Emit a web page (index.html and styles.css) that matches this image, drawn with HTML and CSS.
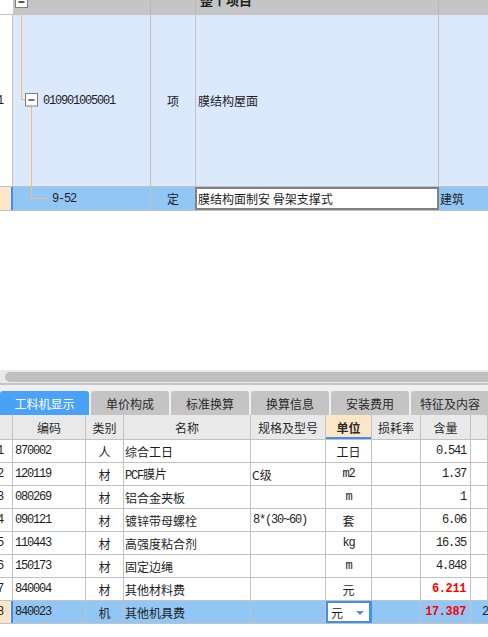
FILE: index.html
```html
<!DOCTYPE html>
<html lang="zh-CN">
<head>
<meta charset="utf-8">
<title>工料机显示</title>
<link rel="stylesheet" href="styles.css">
</head>
<body>
<div class="app">
  <div class="top">
    <div class="tree-grid">
      <div class="row head">
        <div class="c rn"></div>
        <div class="c tree"></div>
        <div class="c type"></div>
        <div class="c name"><span class="head-title">整个项目</span></div>
        <div class="c last"></div>
      </div>
      <div class="row r1">
        <div class="c rn"><span class="rn-num">1</span></div>
        <div class="c tree code-l1"><span class="m">010901005001</span></div>
        <div class="c type center">项</div>
        <div class="c name">膜结构屋面</div>
        <div class="c last"></div>
      </div>
      <div class="row r2">
        <div class="c rn sel-rn"></div>
        <div class="c tree code-l2"><span class="m">9-52</span></div>
        <div class="c type center noborder">定</div>
        <div class="c name editbox">膜结构面制安 骨架支撑式</div>
        <div class="c last">建筑</div>
      </div>
      <svg class="tree-lines" width="60" height="215" viewBox="0 0 60 215">
        <line x1="21.5" y1="8" x2="21.5" y2="100" stroke="#f5bd78" stroke-width="1"/>
        <line x1="21" y1="99.5" x2="25.5" y2="99.5" stroke="#f5bd78" stroke-width="1"/>
        <line x1="31.5" y1="106" x2="31.5" y2="199" stroke="#f5bd78" stroke-width="1"/>
        <line x1="31" y1="198.5" x2="48" y2="198.5" stroke="#f5bd78" stroke-width="1"/>
        <rect x="15.5" y="-5.5" width="12" height="13" fill="#fff" stroke="#7f7f7f"/>
        <line x1="18.5" y1="2" x2="24.5" y2="2" stroke="#111" stroke-width="1.4"/>
        <rect x="25.5" y="93.5" width="12" height="12.5" fill="#fff" stroke="#7f7f7f"/>
        <line x1="28.5" y1="100" x2="34.5" y2="100" stroke="#111" stroke-width="1.2"/>
      </svg>
    </div>
  </div>

  <div class="hscroll"><div class="thumb"></div></div>
  <div class="splitter"></div>

  <div class="tabs">
    <div class="tab active">工料机显示</div>
    <div class="tab">单价构成</div>
    <div class="tab">标准换算</div>
    <div class="tab">换算信息</div>
    <div class="tab">安装费用</div>
    <div class="tab">特征及内容</div>
  </div>

  <div class="grid">
    <div class="grow ghead">
      <div class="g"></div>
      <div class="g center">编码</div>
      <div class="g center">类别</div>
      <div class="g center">名称</div>
      <div class="g center">规格及型号</div>
      <div class="g center unit-head">单位</div>
      <div class="g center">损耗率</div>
      <div class="g center">含量</div>
      <div class="g"></div>
    </div>
    <div class="grow">
      <div class="g rn"><span class="rn-num">1</span></div>
      <div class="g m code">870002</div>
      <div class="g center">人</div>
      <div class="g nm">综合工日</div>
      <div class="g"></div>
      <div class="g center">工日</div>
      <div class="g"></div>
      <div class="g m num">0.541</div>
      <div class="g"></div>
    </div>
    <div class="grow">
      <div class="g rn"><span class="rn-num">2</span></div>
      <div class="g m code">120119</div>
      <div class="g center">材</div>
      <div class="g nm"><span><span class="m">PCF</span>膜片</span></div>
      <div class="g nm">C级</div>
      <div class="g center m">m2</div>
      <div class="g"></div>
      <div class="g m num">1.37</div>
      <div class="g"></div>
    </div>
    <div class="grow">
      <div class="g rn"><span class="rn-num">3</span></div>
      <div class="g m code">080269</div>
      <div class="g center">材</div>
      <div class="g nm">铝合金夹板</div>
      <div class="g"></div>
      <div class="g center m">m</div>
      <div class="g"></div>
      <div class="g m num">1</div>
      <div class="g"></div>
    </div>
    <div class="grow">
      <div class="g rn"><span class="rn-num">4</span></div>
      <div class="g m code">090121</div>
      <div class="g center">材</div>
      <div class="g nm">镀锌带母螺栓</div>
      <div class="g m spec">8*(30~60)</div>
      <div class="g center">套</div>
      <div class="g"></div>
      <div class="g m num">6.06</div>
      <div class="g"></div>
    </div>
    <div class="grow">
      <div class="g rn"><span class="rn-num">5</span></div>
      <div class="g m code">110443</div>
      <div class="g center">材</div>
      <div class="g nm">高强度粘合剂</div>
      <div class="g"></div>
      <div class="g center m">kg</div>
      <div class="g"></div>
      <div class="g m num">16.35</div>
      <div class="g"></div>
    </div>
    <div class="grow">
      <div class="g rn"><span class="rn-num">6</span></div>
      <div class="g m code">150173</div>
      <div class="g center">材</div>
      <div class="g nm">固定边绳</div>
      <div class="g"></div>
      <div class="g center m">m</div>
      <div class="g"></div>
      <div class="g m num">4.848</div>
      <div class="g"></div>
    </div>
    <div class="grow">
      <div class="g rn"><span class="rn-num">7</span></div>
      <div class="g m code">840004</div>
      <div class="g center">材</div>
      <div class="g nm">其他材料费</div>
      <div class="g"></div>
      <div class="g center">元</div>
      <div class="g"></div>
      <div class="g m num red">6.211</div>
      <div class="g"></div>
    </div>
    <div class="grow selrow">
      <div class="g rn sel-rn"><span class="rn-num">8</span></div>
      <div class="g m code">840023</div>
      <div class="g center">机</div>
      <div class="g nm">其他机具费</div>
      <div class="g"></div>
      <div class="g unit-edit"><span>元</span><span class="caret"></span></div>
      <div class="g"></div>
      <div class="g m num red">17.387</div>
      <div class="g m extra">2</div>
    </div>
  </div>
</div>
</body>
</html>
```
FILE: styles.css
```css
html, body {
  margin: 0;
  padding: 0;
}
body {
  width: 488px;
  height: 637px;
  overflow: hidden;
  background: #fff;
  color: #1e1e1e;
  font-family: "Noto Sans CJK SC", "Liberation Sans", sans-serif;
  font-size: 12px;
}
.app {
  width: 488px;
  display: flex;
  flex-direction: column;
}
.m {
  font-family: "Liberation Mono", "Noto Sans CJK SC", monospace;
  font-size: 12px;
  letter-spacing: -1.2px;
}

/* ---------- top tree grid ---------- */
.top {
  height: 370px;
  overflow: hidden;
}
.tree-grid {
  position: relative;
}
.row {
  display: grid;
  grid-template-columns: 13px 138px 45px 243px 1fr;
  border-bottom: 1px solid #c2c2c2;
}
.c {
  border-right: 1px solid #c2c2c2;
  overflow: hidden;
  white-space: nowrap;
  display: flex;
  align-items: center;
}
.center { justify-content: center; }
.head {
  height: 14px;
  background: #c5c5c5;
}
.head .c { align-items: flex-start; border-right-color: #b9b9b9; }
.head .rn { background: #fff; border-right: none; }
.head-title {
  font-weight: bold;
  font-size: 13px;
  line-height: 16px;
  margin-top: -8px;
  padding-left: 2px;
}
.r1 { height: 171px; background: #dce9fd; }
.r1 .rn { background: #fff; }
.rn-num {
  font-family: "Liberation Mono", monospace;
  font-size: 12px;
  margin-left: -3px;
}
.code-l1 { padding-left: 30px; }
.code-l2 { padding-left: 39px; }
.name { padding-left: 2px; font-size: 12px; }
.r2 {
  height: 23px;
  background: #92c7f5;
  grid-template-columns: 13px 138px 44px 244px 1fr;
}
.sel-rn {
  background: #fde6c7;
  border-right: 2px solid #3e8ff0 !important;
}
.noborder { border-right: none; }
.editbox {
  background: #fff;
  border: 2px solid #808080;
  box-sizing: border-box;
  padding-left: 1px;
}
.last { padding-left: 1px; border-right: none; }
.tree-lines {
  position: absolute;
  left: 0;
  top: 0;
  pointer-events: none;
  overflow: visible;
}

/* ---------- scrollbar / splitter ---------- */
.hscroll {
  height: 13px;
  background: #e9e9e9;
  padding: 2px 0 1px 5px;
  box-sizing: border-box;
}
.thumb {
  height: 10px;
  background: #c0c0c0;
  border-radius: 5px 0 0 5px;
}
.splitter {
  height: 6px;
  border-top: 2px solid #c4c4c4;
  background: #f0f0f0;
}

/* ---------- tabs ---------- */
.tabs {
  display: flex;
  gap: 2px;
  height: 24px;
  background: #f0f0f0;
  overflow: hidden;
}
.tab {
  flex: 0 0 78px;
  display: flex;
  align-items: center;
  justify-content: center;
  background: #c4c4c4;
  color: #2a2a2a;
  border-radius: 3px 3px 0 0;
  font-size: 12px;
  white-space: nowrap;
}
.tab.active {
  flex-basis: 89px;
  background: #4aa2f8;
  color: #fff;
}

/* ---------- bottom grid ---------- */
.grow {
  display: grid;
  grid-template-columns: 13px 73px 38px 127px 75px 46px 49px 50px 1fr;
  height: 23px;
  border-bottom: 1px solid #c2c2c2;
  box-sizing: border-box;
}
.g {
  border-right: 1px solid #c2c2c2;
  overflow: hidden;
  white-space: nowrap;
  display: flex;
  align-items: center;
  position: relative;
}
.ghead {
  height: 25px;
  background: #e9e9e9;
  color: #2a2a2a;
}
.unit-head {
  background: #fde6c8;
  font-weight: bold;
  box-shadow: inset 0 -2px 0 #3e8ff0;
}
.code { padding-left: 2px; }
.nm { padding-left: 1px; }
.spec { padding-left: 2px; }
.num {
  justify-content: flex-end;
  padding-right: 4px;
}
.red {
  color: #ff0000;
  font-weight: bold;
  letter-spacing: -0.4px;
}
.selrow { background: #92c7f5; }
.unit-edit {
  background: #fff;
  box-shadow: inset 0 0 0 2px #3e8ff0;
  border-right-color: #3e8ff0;
  padding-left: 5px;
  gap: 13px;
}
.caret {
  width: 0;
  height: 0;
  border-left: 4px solid transparent;
  border-right: 4px solid transparent;
  border-top: 4px solid #5b8ec6;
  margin-top: 2px;
}
.extra { padding-left: 11px; border-right: none; }
```
